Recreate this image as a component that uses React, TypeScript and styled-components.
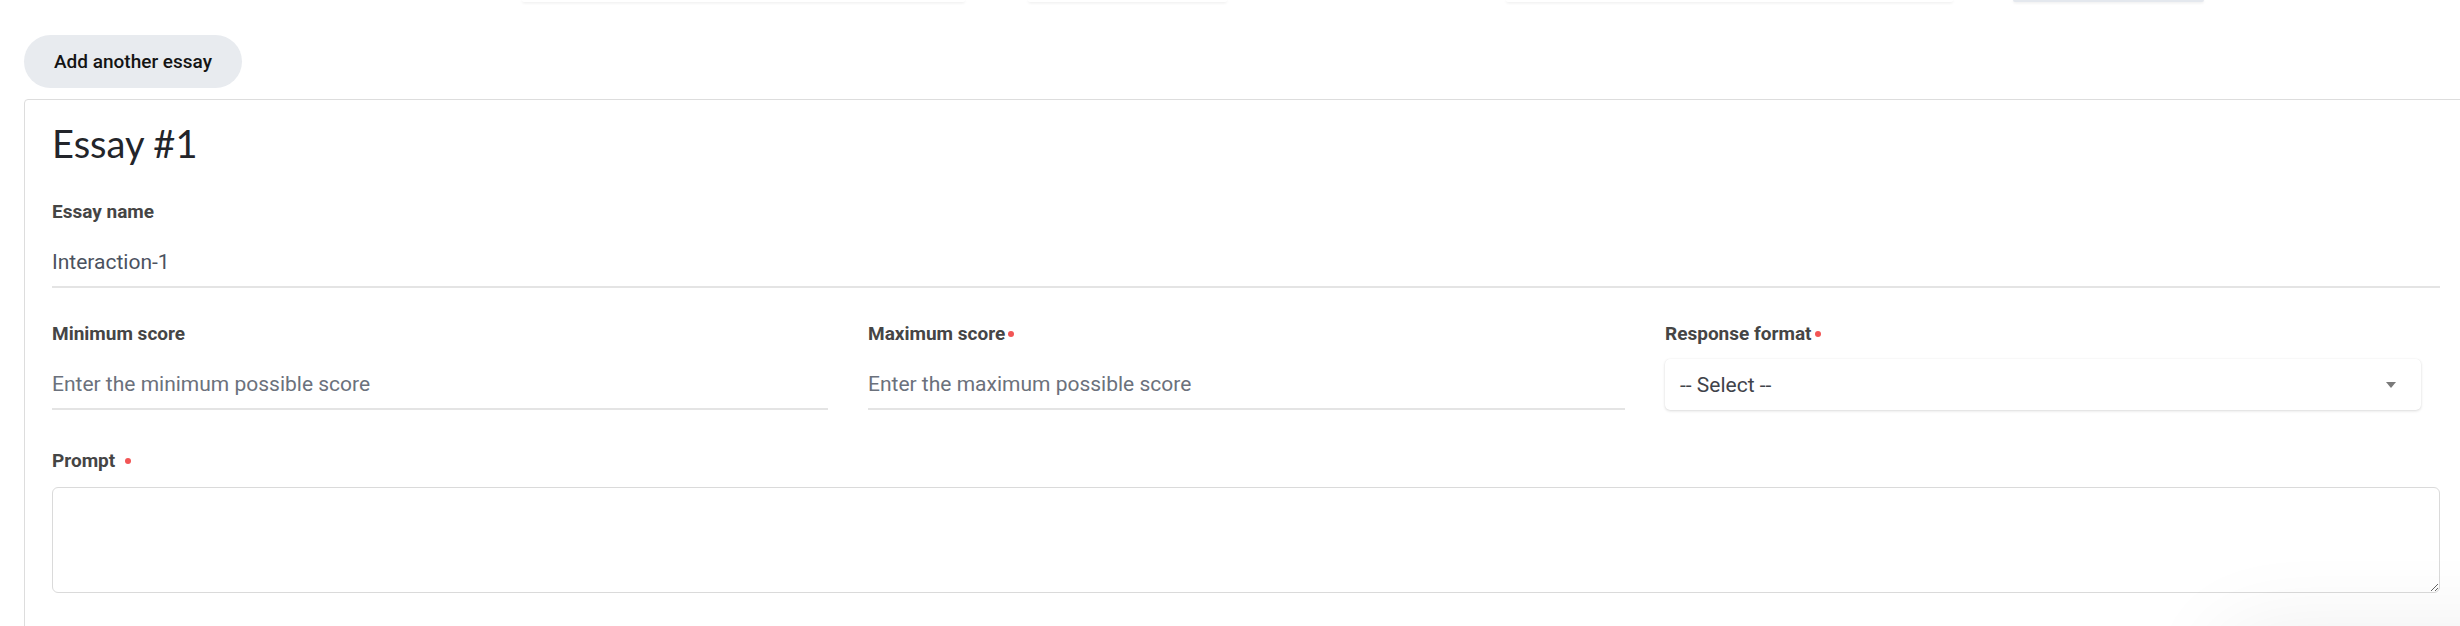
import React from "react";
import styled, { createGlobalStyle } from "styled-components";

const GlobalStyle = createGlobalStyle`
  html, body {
    margin: 0;
    padding: 0;
    background: #ffffff;
    overflow: hidden;
  }
  body {
    font-family: Roboto, "Liberation Sans", Arial, sans-serif;
  }
  * { box-sizing: border-box; }
`;

const Page = styled.div`
  position: relative;
  width: 2460px;
  height: 626px;
  overflow: hidden;
  padding: 0 0 0 24px;
`;

const TopRow = styled.div`
  display: flex;
  height: 2px;
  margin-left: -24px;
`;

const Stub = styled.div<{ $ml: number; $w: number; $tone?: "plain" | "blue" }>`
  margin-left: ${(p) => p.$ml}px;
  width: ${(p) => p.$w}px;
  height: 2px;
  background: ${(p) => (p.$tone === "blue" ? "#e4e8ee" : "#ffffff")};
  border-radius: 0 0 4px 4px;
  box-shadow: 0 1px 3px rgba(0, 0, 0, 0.09);
`;

const AddButton = styled.button`
  margin-top: 33px;
  height: 53px;
  padding: 0 30px;
  border: none;
  border-radius: 27px;
  background: #e8ebef;
  color: #141414;
  font-family: Roboto, "Liberation Sans", sans-serif;
  font-weight: 500;
  font-size: 19px;
  cursor: pointer;
`;

const Card = styled.section`
  margin-top: 11px;
  width: 2445px;
  border: 1px solid #dddddd;
  border-radius: 4px;
  padding: 20px 28px 40px 27px;
  background: #fff;
`;

const Title = styled.h2`
  margin: 0 0 34px;
  font-family: Lato, "Open Sans", sans-serif;
  font-weight: 400;
  font-size: 38px;
  line-height: 46px;
  color: #23252a;
`;

const Field = styled.div<{ $mt?: number }>`
  display: flex;
  flex-direction: column;
  margin-top: ${(p) => p.$mt ?? 0}px;
`;

const Label = styled.label`
  display: flex;
  align-items: center;
  height: 24px;
  font-family: Roboto, "Liberation Sans", sans-serif;
  font-weight: 700;
  font-size: 19px;
  line-height: 24px;
  color: #454545;
`;

const Dot = styled.span<{ $gap: number }>`
  display: inline-block;
  width: 6px;
  height: 6px;
  border-radius: 50%;
  background: #f25555;
  margin-left: ${(p) => p.$gap}px;
`;

const TextInput = styled.input`
  margin-top: 20px;
  width: 100%;
  height: 44px;
  padding: 0 0 6px 0;
  border: none;
  border-bottom: 2px solid #e4e4e4;
  background: transparent;
  outline: none;
  font-family: Roboto, "Liberation Sans", sans-serif;
  font-size: 21px;
  color: #4b5260;
  &::placeholder {
    color: #6b717c;
  }
`;

const Row = styled.div`
  display: grid;
  grid-template-columns: 776px 757px 1fr;
  column-gap: 40px;
  margin-top: 34px;
`;

const SelectBox = styled.div`
  margin-top: 13px;
  margin-right: 19px;
  height: 51px;
  display: flex;
  align-items: center;
  justify-content: space-between;
  padding: 0 25px 0 15px;
  background: #fff;
  border-radius: 5px;
  box-shadow: 0 1px 3px rgba(0, 0, 0, 0.14), 0 0 1px rgba(0, 0, 0, 0.08);
  font-family: Roboto, "Liberation Sans", sans-serif;
  font-size: 21px;
  color: #3f434a;
  cursor: pointer;
`;

const TextArea = styled.textarea`
  margin-top: 14px;
  width: 100%;
  height: 106px;
  border: 1px solid #dadada;
  border-radius: 6px;
  resize: vertical;
  outline: none;
  font-family: Roboto, "Liberation Sans", sans-serif;
  font-size: 18px;
  padding: 10px 14px;
`;

const Glow = styled.div`
  position: absolute;
  left: 2240px;
  top: 650px;
  width: 420px;
  height: 200px;
  border-radius: 12px;
  box-shadow: 0 0 90px 20px rgba(0, 0, 0, 0.07);
  pointer-events: none;
`;

const Caret = () => (
  <svg width="10" height="6" viewBox="0 0 10 6" aria-hidden="true">
    <path d="M0 0 L10 0 L5 6 Z" fill="#7a7a7a" />
  </svg>
);

export default function App() {
  return (
    <>
      <GlobalStyle />
      <Page>
        <TopRow>
          <Stub $ml={522} $w={443} />
          <Stub $ml={63} $w={199} />
          <Stub $ml={279} $w={447} />
          <Stub $ml={60} $w={191} $tone="blue" />
        </TopRow>
        <AddButton>Add another essay</AddButton>
        <Card>
          <Title>Essay #1</Title>
          <Field>
            <Label>Essay name</Label>
            <TextInput defaultValue="Interaction-1" />
          </Field>
          <Row>
            <Field>
              <Label>Minimum score</Label>
              <TextInput placeholder="Enter the minimum possible score" />
            </Field>
            <Field>
              <Label>
                Maximum score
                <Dot $gap={3} />
              </Label>
              <TextInput placeholder="Enter the maximum possible score" />
            </Field>
            <Field>
              <Label>
                Response format
                <Dot $gap={3} />
              </Label>
              <SelectBox role="combobox">
                <span>-- Select --</span>
                <Caret />
              </SelectBox>
            </Field>
          </Row>
          <Field $mt={39}>
            <Label>
              Prompt
              <Dot $gap={10} />
            </Label>
            <TextArea />
          </Field>
        </Card>
        <Glow />
      </Page>
    </>
  );
}
